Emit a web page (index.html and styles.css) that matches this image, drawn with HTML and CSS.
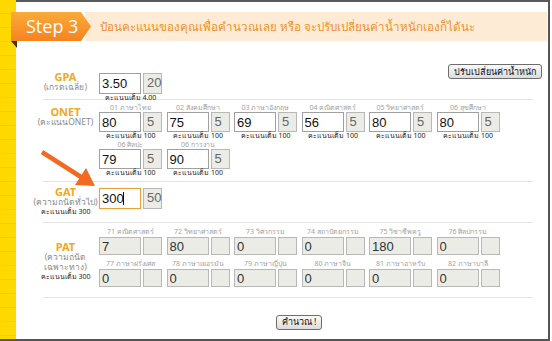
FILE: index.html
```html
<!DOCTYPE html>
<html lang="th">
  <head>
    <meta charset="UTF-8" />
    <meta name="viewport" content="width=device-width, initial-scale=1.0" />
    <title>Step 3 - คำนวณคะแนน</title>
    <link rel="stylesheet" href="styles.css">
  </head>
  <body>
    <div class="frame">
      <div class="rail"></div>
      <div class="main">
        <div class="banner">
          <div class="step">Step 3</div>
          <div class="banner-text">ป้อนคะแนนของคุณเพื่อคำนวณเลย หรือ จะปรับเปลี่ยนค่าน้ำหนักเองก็ได้นะ</div>
        </div>

        <div class="form">
          <div class="section gpa">
            <div class="label"><b>GPA</b><span>(เกรดเฉลี่ย)</span></div>
            <div class="cells">
              <div class="cell">
                <div class="pair"><input type="text" value="3.50" /><span class="weight">20</span></div>
                <div class="max">คะแนนเต็ม 4.00</div>
              </div>
            </div>
            <button class="btn btn-weights">ปรับเปลี่ยนค่าน้ำหนัก</button>
          </div>
          <div class="sep"></div>

          <div class="section onet">
            <div class="label"><b>ONET</b><span>(คะแนนONET)</span></div>
            <div class="cells">
              <div class="cell"><div class="cap">01 ภาษาไทย</div><div class="pair"><input type="text" value="80" /><span class="weight">5</span></div><div class="max">คะแนนเต็ม 100</div></div>
              <div class="cell"><div class="cap">02 สังคมศึกษา</div><div class="pair"><input type="text" value="75" /><span class="weight">5</span></div><div class="max">คะแนนเต็ม 100</div></div>
              <div class="cell"><div class="cap">03 ภาษาอังกฤษ</div><div class="pair"><input type="text" value="69" /><span class="weight">5</span></div><div class="max">คะแนนเต็ม 100</div></div>
              <div class="cell"><div class="cap">04 คณิตศาสตร์</div><div class="pair"><input type="text" value="56" /><span class="weight">5</span></div><div class="max">คะแนนเต็ม 100</div></div>
              <div class="cell"><div class="cap">05 วิทยาศาสตร์</div><div class="pair"><input type="text" value="80" /><span class="weight">5</span></div><div class="max">คะแนนเต็ม 100</div></div>
              <div class="cell"><div class="cap">06 สุขศึกษา</div><div class="pair"><input type="text" value="80" /><span class="weight">5</span></div><div class="max">คะแนนเต็ม 100</div></div>
              <div class="cell"><div class="cap">06 ศิลปะ</div><div class="pair"><input type="text" value="79" /><span class="weight">5</span></div><div class="max">คะแนนเต็ม 100</div></div>
              <div class="cell"><div class="cap">06 การงาน</div><div class="pair"><input type="text" value="90" /><span class="weight">5</span></div><div class="max">คะแนนเต็ม 100</div></div>
            </div>
          </div>
          <div class="sep"></div>

          <div class="section gat">
            <div class="label"><b>GAT</b><span>(ความถนัดทั่วไป)</span><small>คะแนนเต็ม 300</small></div>
            <div class="cells">
              <div class="cell">
                <div class="pair"><span class="focus"><input type="text" value="300" /></span><span class="weight">50</span></div>
              </div>
            </div>
          </div>
          <div class="sep"></div>

          <div class="section pat">
            <div class="label"><b>PAT</b><span>(ความถนัด</span><span>เฉพาะทาง)</span><small>คะแนนเต็ม 300</small></div>
            <div class="cells">
              <div class="cell"><div class="cap">71 คณิตศาสตร์</div><div class="pair"><input type="text" value="7" disabled /><span class="weight"></span></div></div>
              <div class="cell"><div class="cap">72 วิทยาศาสตร์</div><div class="pair"><input type="text" value="80" disabled /><span class="weight"></span></div></div>
              <div class="cell"><div class="cap">73 วิศวกรรม</div><div class="pair"><input type="text" value="0" disabled /><span class="weight"></span></div></div>
              <div class="cell"><div class="cap">74 สถาปัตยกรรม</div><div class="pair"><input type="text" value="0" disabled /><span class="weight"></span></div></div>
              <div class="cell"><div class="cap">75 วิชาชีพครู</div><div class="pair"><input type="text" value="180" disabled /><span class="weight"></span></div></div>
              <div class="cell"><div class="cap">76 ศิลปกรรม</div><div class="pair"><input type="text" value="0" disabled /><span class="weight"></span></div></div>
              <div class="cell"><div class="cap">77 ภาษาฝรั่งเศส</div><div class="pair"><input type="text" value="0" disabled /><span class="weight"></span></div></div>
              <div class="cell"><div class="cap">78 ภาษาเยอรมัน</div><div class="pair"><input type="text" value="0" disabled /><span class="weight"></span></div></div>
              <div class="cell"><div class="cap">79 ภาษาญี่ปุ่น</div><div class="pair"><input type="text" value="0" disabled /><span class="weight"></span></div></div>
              <div class="cell"><div class="cap">80 ภาษาจีน</div><div class="pair"><input type="text" value="0" disabled /><span class="weight"></span></div></div>
              <div class="cell"><div class="cap">81 ภาษาอาหรับ</div><div class="pair"><input type="text" value="0" disabled /><span class="weight"></span></div></div>
              <div class="cell"><div class="cap">82 ภาษาบาลี</div><div class="pair"><input type="text" value="0" disabled /><span class="weight"></span></div></div>
            </div>
          </div>
          <div class="sep"></div>

          <div class="footer">
            <button class="btn btn-calc">คำนวณ !</button>
          </div>
        </div>
      </div>

      <!-- arrow pointing at the GAT box -->
      <svg class="arrow" width="110" height="200" viewBox="0 0 110 200">
        <line x1="42" y1="152" x2="81" y2="177" stroke="#f26a22" stroke-width="4.5" />
        <polygon points="95,186 75,185 86,168" fill="#f26a22" />
      </svg>
    </div>
  </body>
</html>
```

FILE: styles.css
```css
body {
  margin: 0;
  font-family: "Noto Sans", "DejaVu Sans", sans-serif;
  color: #222;
}

.frame {
  position: relative;
  display: flex;
  width: 550px;
  height: 341px;
  box-sizing: border-box;
  border-right: 2px solid #555;
  border-bottom: 2px solid #555;
}

.rail {
  width: 16px;
  flex: none;
  background: repeating-linear-gradient(to bottom, #ffd800 0 13px, #f5cd00 13px 14px);
}

.main {
  flex: 1;
  min-width: 0;
  display: flex;
  flex-direction: column;
  border-top: 2px solid #5a5a5a;
}

/* header ribbon */
.banner {
  display: flex;
  height: 29px;
  margin: 10px 0 0 -5px;
}

.step {
  position: relative;
  z-index: 1;
  width: 80px;
  flex: none;
  box-sizing: border-box;
  padding: 2px 0 0 15px;
  color: #fff;
  font: 18px/25px "Open Sans", "DejaVu Sans", sans-serif;
  background: linear-gradient(to bottom, #fcaa3a, #f5831f);
  clip-path: polygon(0 0, 70px 0, 80px 50%, 70px 100%, 0 100%);
}

.banner::before {
  content: "";
  position: absolute;
  left: 11px;
  top: 41px;
  border-top: 7px solid #4a3210;
  border-left: 6px solid transparent;
}

.banner-text {
  flex: 1;
  margin: 0 1px 0 -6px;
  padding-left: 15px;
  background: #fdebd6;
  color: #f2901e;
  font-size: 11.6px;
  line-height: 29px;
  white-space: nowrap;
  overflow: hidden;
}

/* form */
.form {
  padding-left: 16px;
  margin-top: 23px;
}

.section {
  display: flex;
  align-items: flex-start;
}

.label {
  width: 67px;
  flex: none;
  display: flex;
  flex-direction: column;
  align-items: center;
  font-size: 8.5px;
  line-height: 10px;
  color: #8a8a8a;
  white-space: nowrap;
}

.label b {
  color: #f5a623;
  font-size: 11px;
  line-height: 11px;
}

.label small {
  font-size: 7px;
  color: #222;
}

.cells {
  display: flex;
  flex-wrap: wrap;
  width: 405px;
}

.cell {
  width: 67.5px;
  display: flex;
  flex-direction: column;
  align-items: flex-start;
}

.cap,
.max {
  width: 63px;
  text-align: center;
  white-space: nowrap;
  font-size: 7px;
}

.cap {
  line-height: 9px;
  color: #a3a3a3;
}

.max {
  line-height: 8px;
  color: #222;
}

.pair {
  display: flex;
  height: 20px;
}

.pair input {
  width: 42px;
  height: 100%;
  box-sizing: border-box;
  margin: 0;
  padding: 0 2px;
  border: 1px solid #a0a0a0;
  background: #fff;
  font: 13px "Liberation Sans", sans-serif;
  color: #111;
}

.weight {
  width: 19px;
  height: 100%;
  box-sizing: border-box;
  margin-left: 2px;
  padding-left: 3px;
  border: 1px solid #b8b8b8;
  background: #ecece6;
  font: 13px/18px "Liberation Sans", sans-serif;
  color: #666;
}

.sep {
  height: 1px;
  margin: 0 15px 0 11px;
  background: #e3e3e3;
}

.gpa {
  height: 35px;
}

.gpa .label {
  padding-top: 7px;
}

.gpa .cell {
  padding-top: 9px;
}

.gpa .pair {
  height: 21px;
}

.btn {
  height: 15px;
  margin: 0;
  padding: 0 5px;
  border: 1px solid #6d6d6d;
  border-radius: 3px;
  background: linear-gradient(to bottom, #fafafa, #dcdcdc);
  font: 9px/12px "Noto Sans", "DejaVu Sans", sans-serif;
  color: #111;
  white-space: nowrap;
}

.btn-weights {
  margin: 0 6px 0 auto;
}

.onet {
  padding-top: 3px;
  height: 78px;
}

.onet .label {
  padding-top: 3px;
}

.gat {
  height: 40px;
}

.gat .label {
  padding-top: 4px;
}

.gat .cell {
  padding-top: 6px;
}

.gat .pair {
  height: 21px;
}

.focus {
  position: relative;
  display: flex;
}

.focus input {
  border-color: #e8a13c;
  box-shadow: 0 0 1px #f5c27a;
}

.focus::after {
  content: "";
  position: absolute;
  left: 24px;
  top: 4px;
  width: 1px;
  height: 13px;
  background: #111;
}

.pat {
  height: 74px;
}

.pat .label {
  padding-top: 18px;
}

.pat .cap {
  margin-top: 3px;
  line-height: 11px;
}

.pat .pair {
  height: 18px;
}

.pat .pair input {
  background: #ecece6;
  border-color: #b8b8b8;
  color: #333;
}

.footer {
  padding: 10px 0 0 18px;
  text-align: center;
}

.arrow {
  position: absolute;
  left: 0;
  top: 0;
}
```
